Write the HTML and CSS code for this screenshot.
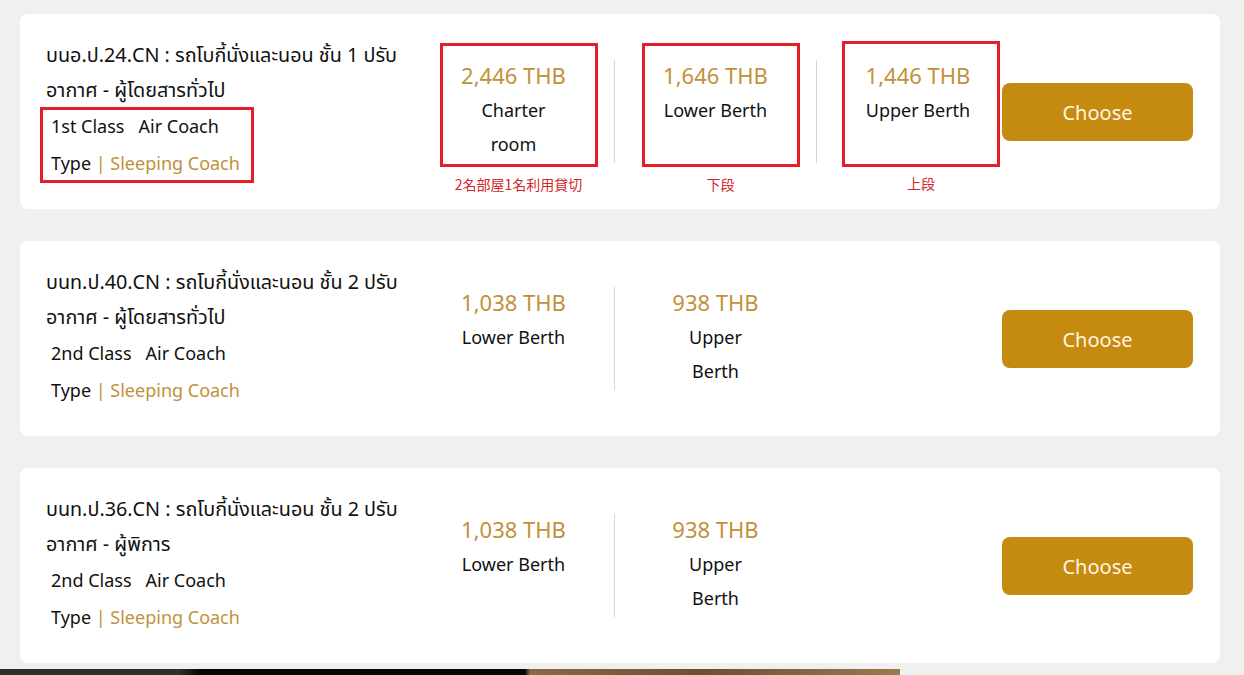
FILE: index.html
```html
<!DOCTYPE html>
<html lang="th">
<head>
  <meta charset="UTF-8">
  <meta name="viewport" content="width=device-width, initial-scale=1.0">
  <title>Seat Class</title>
  <link rel="stylesheet" href="styles.css">
</head>
<body>
  <div class="list">

    <!-- Coach 1 -->
    <div class="card">
      <div class="info">
        <div class="title">บนอ.ป.24.CN : รถโบกี้นั่งและนอน ชั้น 1 ปรับ</div>
        <div class="title">อากาศ - ผู้โดยสารทั่วไป</div>
        <div class="meta flag">
          <div>1st Class &nbsp; Air Coach</div>
          <div>Type <span class="gold">| Sleeping Coach</span></div>
        </div>
      </div>
      <div class="prices">
        <div class="price marked">
          <div class="amount">2,446 THB</div>
          <div class="label">Charter<br>room</div>
          <div class="note">2名部屋1名利用貸切</div>
        </div>
        <div class="price marked">
          <div class="amount">1,646 THB</div>
          <div class="label">Lower Berth</div>
          <div class="note">下段</div>
        </div>
        <div class="price marked">
          <div class="amount">1,446 THB</div>
          <div class="label">Upper Berth</div>
          <div class="note">上段</div>
        </div>
      </div>
      <button class="choose">Choose</button>
    </div>

    <!-- Coach 2 -->
    <div class="card">
      <div class="info">
        <div class="title">บนท.ป.40.CN : รถโบกี้นั่งและนอน ชั้น 2 ปรับ</div>
        <div class="title">อากาศ - ผู้โดยสารทั่วไป</div>
        <div class="meta">
          <div>2nd Class &nbsp; Air Coach</div>
          <div>Type <span class="gold">| Sleeping Coach</span></div>
        </div>
      </div>
      <div class="prices">
        <div class="price">
          <div class="amount">1,038 THB</div>
          <div class="label">Lower Berth</div>
        </div>
        <div class="price">
          <div class="amount">938 THB</div>
          <div class="label">Upper<br>Berth</div>
        </div>
      </div>
      <button class="choose">Choose</button>
    </div>

    <!-- Coach 3 -->
    <div class="card">
      <div class="info">
        <div class="title">บนท.ป.36.CN : รถโบกี้นั่งและนอน ชั้น 2 ปรับ</div>
        <div class="title">อากาศ - ผู้พิการ</div>
        <div class="meta">
          <div>2nd Class &nbsp; Air Coach</div>
          <div>Type <span class="gold">| Sleeping Coach</span></div>
        </div>
      </div>
      <div class="prices">
        <div class="price">
          <div class="amount">1,038 THB</div>
          <div class="label">Lower Berth</div>
        </div>
        <div class="price">
          <div class="amount">938 THB</div>
          <div class="label">Upper<br>Berth</div>
        </div>
      </div>
      <button class="choose">Choose</button>
    </div>

  </div>

  <div class="banner"></div>
</body>
</html>
```

FILE: styles.css
```css
body {
  margin: 0;
  font-family: "Noto Sans", "Noto Sans Thai", "Liberation Sans", sans-serif;
  background: #f0f0f0;
  color: #111;
}

.list {
  display: flex;
  flex-direction: column;
  gap: 32px;
  padding: 14px 24px 6px 20px;
}

.card {
  display: flex;
  align-items: center;
  width: 1200px;
  height: 195px;
  box-sizing: border-box;
  padding: 23px 27px 0 26px;
  background: #fff;
  border-radius: 8px;
}

.info {
  width: 367px;
  flex-shrink: 0;
  font-size: 18px;
  line-height: 36.5px;
  align-self: flex-start;
}

.title {
  height: 35px;
  font-size: 19.8px;
  line-height: 35px;
  white-space: nowrap;
}

.meta {
  padding-left: 5px;
  margin-top: 1px;
}

.meta div {
  height: 37px;
}

.flag {
  position: relative;
}

.flag::after {
  content: '';
  position: absolute;
  top: -1px;
  left: -6px;
  width: 214px;
  bottom: -1px;
  border: 3px solid #e21f26;
  box-sizing: border-box;
}

.gold {
  color: #c1913a;
}

.prices {
  display: flex;
  flex-shrink: 0;
  align-self: flex-start;
  width: 589px;
  margin-top: 23px;
  height: 103px;
}

.price {
  position: relative;
  flex-shrink: 0;
  width: 201px;
  text-align: center;
  border-right: 1px solid #d6d6d6;
}

.price:last-child {
  border-right: none;
  width: 202px;
}

.prices .price:nth-child(2) {
  width: 201px;
}

.amount {
  margin-top: -2px;
  font-size: 22px;
  line-height: 34px;
  color: #c1913a;
}

.label {
  margin-top: 1px;
  font-size: 18px;
  line-height: 34px;
}

.marked::before {
  content: '';
  position: absolute;
  top: -17px;
  bottom: -4px;
  left: 27px;
  right: 16px;
  border: 3px solid #e21f26;
}

.marked:nth-child(3)::before {
  top: -19px;
  left: 25px;
  right: 19px;
}

.note {
  position: absolute;
  top: 100%;
  left: 10px;
  right: 0;
  margin-top: 12px;
  font-size: 14px;
  line-height: 18px;
  color: #d3262c;
  font-family: "Noto Sans CJK JP", "Noto Sans", sans-serif;
}

.marked:nth-child(3) .note {
  left: 6px;
  margin-top: 11px;
}

.choose {
  position: relative;
  top: -11px;
  width: 191px;
  height: 58px;
  margin-left: auto;
  flex-shrink: 0;
  background: #c58a10;
  color: #fff6e0;
  font-family: inherit;
  font-size: 20px;
  border: none;
  border-radius: 8px;
  cursor: pointer;
}

.banner {
  width: 900px;
  height: 300px;
  background: linear-gradient(to right, #2e2e2e 0, #2e2e2e 180px, #050505 200px, #060606 525px, #8a6a42 530px, #6b5030 700px, #9a7a50 900px);
}
```
